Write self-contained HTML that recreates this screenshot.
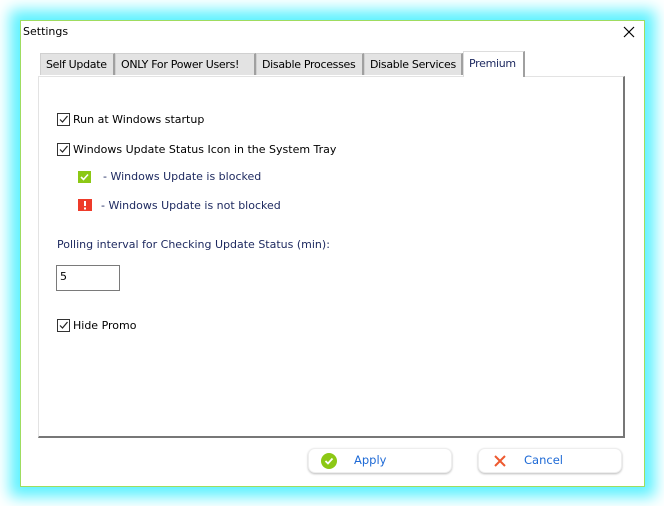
<!DOCTYPE html>
<html><head><style>
body{margin:0;width:664px;height:506px;background:#fff;position:relative;overflow:hidden;font-family:"DejaVu Sans","Liberation Sans",sans-serif;font-size:11px;color:#000}
.win{position:absolute;left:20px;top:20px;width:623px;height:465px;background:#fff;border:1px solid #9fdc60;box-shadow:0 0 14px 10px #5ef2ff}
.a{position:absolute;white-space:nowrap}
.tab{position:absolute;top:53px;height:22px;background:#e3e3e3;border:1px solid #d0d0d0;border-right:2px solid #a0a0a0;border-bottom:none;font-size:11px;line-height:22px;padding-left:5px;box-sizing:border-box;letter-spacing:-0.3px}
.panel{position:absolute;left:38px;top:76px;width:587px;height:362px;box-sizing:border-box;border-left:1px solid #e3e3e3;border-top:1px solid #e3e3e3;border-right:2px solid #777;border-bottom:2px solid #777}
.cb{position:absolute;width:11px;height:11px;border:1px solid #333;background:#fff}
.cb svg{position:absolute;left:0;top:0}
.t{color:#000;font-size:11px}
.blue{color:#1e2a60}
.btn{position:absolute;top:448px;width:144px;height:25px;border-radius:7px;background:#fff;box-shadow:0 1px 2px #bbb;border:1px solid #eee;box-sizing:border-box}
.btn span{position:absolute;top:4px;color:#1e6ad6;font-size:11.5px}
</style></head><body>
<div class="win"></div>
<div class="a" style="left:23px;top:25px;font-size:11px">Settings</div>
<svg class="a" style="left:623px;top:26px" width="12" height="12"><path d="M1 1L11 11M11 1L1 11" stroke="#000" stroke-width="1.2"/></svg>
<div class="tab" style="left:40px;width:75px">Self Update</div>
<div class="tab" style="left:115px;width:141px">ONLY For Power Users!</div>
<div class="tab" style="left:256px;width:108px">Disable Processes</div>
<div class="tab" style="left:364px;width:99px">Disable Services</div>
<div class="tab" style="left:463px;top:51px;height:26px;width:62px;background:#fff;border-color:#ddd;border-right:2px solid #a0a0a0;line-height:23px;color:#1e2a60;z-index:2">Premium</div>
<div class="panel"></div>
<div class="cb" style="left:57px;top:113px"><svg width="11" height="11"><path d="M2 5.5L4.5 8L9.5 2" stroke="#222" fill="none" stroke-width="1.2"/></svg></div>
<div class="a t" style="left:73px;top:113px">Run at Windows startup</div>
<div class="cb" style="left:57px;top:143px"><svg width="11" height="11"><path d="M2 5.5L4.5 8L9.5 2" stroke="#222" fill="none" stroke-width="1.2"/></svg></div>
<div class="a t" style="left:73px;top:143px">Windows Update Status Icon in the System Tray</div>
<svg class="a" style="left:78px;top:171px" width="13" height="12"><rect width="13" height="12" fill="#8cc815"/><path d="M3 6L5.5 8.5L10 3.5" stroke="#fff" stroke-width="1.6" fill="none"/></svg>
<div class="a blue" style="left:103px;top:170px">- Windows Update is blocked</div>
<svg class="a" style="left:78px;top:199px" width="14" height="12"><rect width="14" height="12" fill="#ee3b2a"/><rect x="6" y="2" width="2" height="5" fill="#fff"/><rect x="6" y="8.5" width="2" height="2" fill="#fff"/></svg>
<div class="a blue" style="left:101px;top:199px">- Windows Update is not blocked</div>
<div class="a blue" style="left:57px;top:238px">Polling interval for Checking Update Status (min):</div>
<div class="a" style="left:56px;top:265px;width:62px;height:24px;border:1px solid #7a7a7a;box-sizing:content-box"></div>
<div class="a" style="left:60px;top:270px">5</div>
<div class="cb" style="left:57px;top:319px"><svg width="11" height="11"><path d="M2 5.5L4.5 8L9.5 2" stroke="#222" fill="none" stroke-width="1.2"/></svg></div>
<div class="a t" style="left:73px;top:319px">Hide Promo</div>
<div class="btn" style="left:308px"><svg class="a" style="left:12px;top:4px" width="16" height="16"><circle cx="8" cy="8" r="8" fill="#8cc815"/><path d="M4.5 8L7 10.5L11.5 5.5" stroke="#fff" stroke-width="1.8" fill="none"/></svg><span style="left:45px">Apply</span></div>
<div class="btn" style="left:478px"><svg class="a" style="left:15px;top:6px" width="12" height="12"><path d="M1 1L11 11M11 1L1 11" stroke="#ee5a30" stroke-width="2"/></svg><span style="left:45px">Cancel</span></div>
</body></html>
